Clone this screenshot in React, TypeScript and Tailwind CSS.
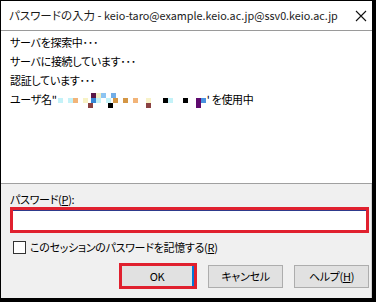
import React from "react";

const FONT = '"Noto Sans CJK JP", "Noto Sans", sans-serif';

const pixels: [number, number, string][] = [
  [33, 0, "#5a1848"],
  [38, 0, "#f3efc4"],
  [43, 0, "#8cc4f2"],
  [53, 0, "#72aee8"],
  [0, 1, "#c4f2f8"],
  [10, 1, "#c4f2f8"],
  [15, 1, "#f2b478"],
  [25, 1, "#f8f2c4"],
  [33, 1, "#3686d6"],
  [38, 1, "#c4f2f8"],
  [48, 1, "#c4f2f8"],
  [55, 1, "#d49644"],
  [65, 1, "#d49644"],
  [75, 1, "#f2b478"],
  [88, 1, "#f8f2c8"],
  [105, 1, "#000000"],
  [110, 1, "#c4f2f8"],
  [125, 1, "#000000"],
  [143, 1, "#4a92e0"],
  [30, 2, "#8a4242"],
  [50, 2, "#000000"],
  [88, 2, "#8a4242"],
  [138, 1, "#5e0a6e"],
  [138, 2, "#5e0a6e"],
];

function Pixelated() {
  return (
    <svg width="150" height="16" viewBox="0 0 148 16" className="shrink-0">
      {pixels.map(([x, r, c], i) => (
        <rect key={i} x={x} y={1 + r * 5} width="5" height="5" fill={c} />
      ))}
    </svg>
  );
}

export default function App() {
  return (
    <div
      className="w-[376px] h-[302px] bg-black pl-[1px] pt-[1px] pr-[4px] pb-[4px] overflow-hidden [font-feature-settings:'palt']"
      style={{ fontFamily: FONT }}
    >
      <div className="flex flex-col w-[371px] h-[297px] bg-white text-[11px] tracking-[-0.3px] text-black">
        {/* Title bar */}
        <div className="flex items-center h-[30px] pl-[8px] pr-[5px] bg-white border-b border-[#9a9a9a] shrink-0 tracking-normal">
          <span className="flex-1 whitespace-nowrap text-[#1a1a1a] text-[11.5px]">
            パスワードの入力 - <span className="text-[10.8px]">keio-taro@example.keio.ac.jp@ssv0.keio.ac.jp</span>
          </span>
          <svg width="12" height="12" viewBox="0 0 12 12" className="shrink-0">
            <path d="M1 1 L11 11 M11 1 L1 11" stroke="#111" strokeWidth="1.1" />
          </svg>
        </div>

        {/* Status area */}
        <div className="flex flex-col h-[153px] pt-[2px] pl-[9px] leading-[19px] bg-white border-b border-[#a0a0a0] shrink-0">
          <div>サーバを探索中･･･</div>
          <div>サーバに接続しています･･･</div>
          <div>認証しています･･･</div>
          <div className="flex items-center">
            <span>ユーザ名"</span>
            <Pixelated />
            <span>' を使用中</span>
          </div>
        </div>

        {/* Bottom panel */}
        <div className="flex flex-col flex-1 bg-[#f0f0f0] border-r border-[#cfcfcf] pt-[8px]">
          <div className="pl-[9px] leading-[15px]">
            パスワード(<span className="underline">P</span>):
          </div>
          <div className="ml-[9px] mr-[2px] h-[26px] border-[3px] border-[#e0202e] bg-white">
            <div className="h-full border-t border-[#2e3a8c] bg-white" />
          </div>
          <div className="flex items-center mt-[7px] pl-[12px] h-[14px]">
            <div className="w-[13px] h-[13px] border border-[#333] bg-white shrink-0" />
            <span className="ml-[4px] leading-[14px]">
              このセッションのパスワードを記憶する(<span className="underline">R</span>)
            </span>
          </div>
          <div className="flex items-center justify-end mt-[9px] pr-[2px] gap-[11px]">
            <div className="w-[78px] h-[26px] border-[3px] border-[#e0202e] flex">
              <div className="flex-1 flex items-center justify-center bg-[#e1e1e1] border-r-2 border-[#0078d7] pt-[1px]">
                OK
              </div>
            </div>
            <div className="w-[75px] h-[23px] border border-[#adadad] bg-[#e1e1e1] flex items-center justify-center">
              キャンセル
            </div>
            <div className="w-[75px] h-[23px] border border-[#adadad] bg-[#e1e1e1] flex items-center justify-center">
              ヘルプ(<span className="underline">H</span>)
            </div>
          </div>
        </div>
      </div>
    </div>
  );
}
